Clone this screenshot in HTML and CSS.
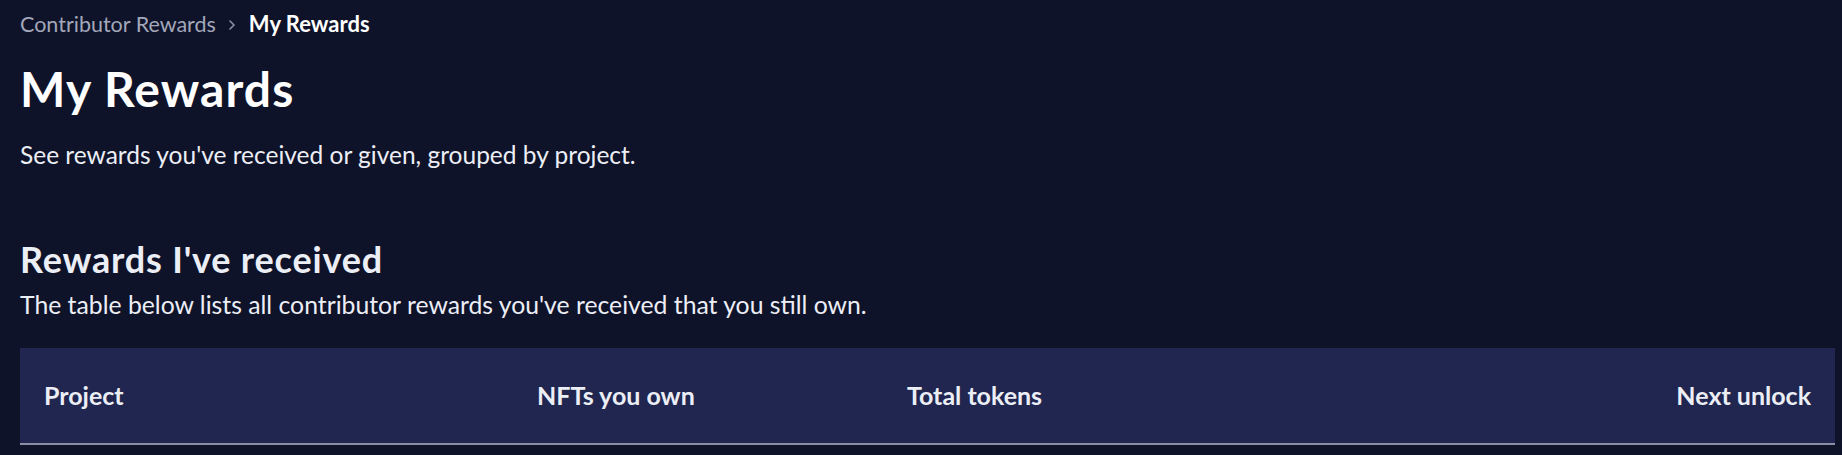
FILE: index.html
```html
<!DOCTYPE html>
<html lang="en">
<head>
<meta charset="utf-8">
<title>My Rewards</title>
<link rel="stylesheet" href="styles.css">
</head>
<body>
<main class="page">
  <nav class="breadcrumb">
    <span class="crumb">Contributor Rewards</span>
    <svg class="chev" width="8" height="10" viewBox="0 0 8 10" aria-hidden="true"><path d="M2 1 6 5 2 9" fill="none" stroke="#8d91a4" stroke-width="1.6" stroke-linecap="round" stroke-linejoin="round"/></svg>
    <span class="crumb current">My Rewards</span>
  </nav>
  <h1 class="title">My Rewards</h1>
  <p class="lead">See rewards you've received or given, grouped by project.</p>

  <section class="section">
    <h2 class="section-title">Rewards I've received</h2>
    <p class="section-desc">The table below lists all contributor rewards you've received that you still own.</p>
    <div class="table">
      <div class="thead">
        <div class="th">Project</div>
        <div class="th">NFTs you own</div>
        <div class="th">Total tokens</div>
        <div class="th right">Next unlock</div>
      </div>
    </div>
  </section>
</main>
</body>
</html>
```

FILE: styles.css
```css
html, body {
  margin: 0;
  padding: 0;
  background: #0f1329;
}
body {
  font-family: "Lato", "Noto Sans", sans-serif;
  color: #eceef6;
}
.page {
  padding: 12px 7px 0 20px;
}
.breadcrumb {
  display: flex;
  align-items: center;
  font-size: 21.5px;
  line-height: 24px;
  height: 24px;
}
.crumb {
  color: #a3a7ba;
}
.crumb.current {
  color: #ffffff;
  font-weight: 700;
  font-size: 22px;
}
.chev {
  margin: 2px 13px 0 12px;
}
.title {
  margin: 25px 0 0;
  font-size: 48px;
  line-height: 56px;
  letter-spacing: 1.1px;
  font-weight: 700;
  color: #ffffff;
}
.lead {
  margin: 23px 0 0;
  font-size: 24.5px;
  line-height: 30px;
  color: #eceef6;
}
.section {
  margin-top: 69px;
}
.section-title {
  margin: 0;
  font-size: 36px;
  line-height: 40px;
  letter-spacing: 0.8px;
  font-weight: 700;
  color: #eceef6;
}
.section-desc {
  margin: 11px 0 0;
  font-size: 24.75px;
  line-height: 30px;
}
.table {
  margin-top: 28px;
}
.thead {
  display: grid;
  grid-template-columns: 493px 370px 1fr 1fr;
  background: #20264f;
  border-bottom: 2px solid #8a8ea5;
}
.th {
  padding: 32px 24px 33px;
  font-size: 25px;
  line-height: 30px;
  font-weight: 700;
  color: #eceef6;
}
.th.right {
  text-align: right;
}
```
